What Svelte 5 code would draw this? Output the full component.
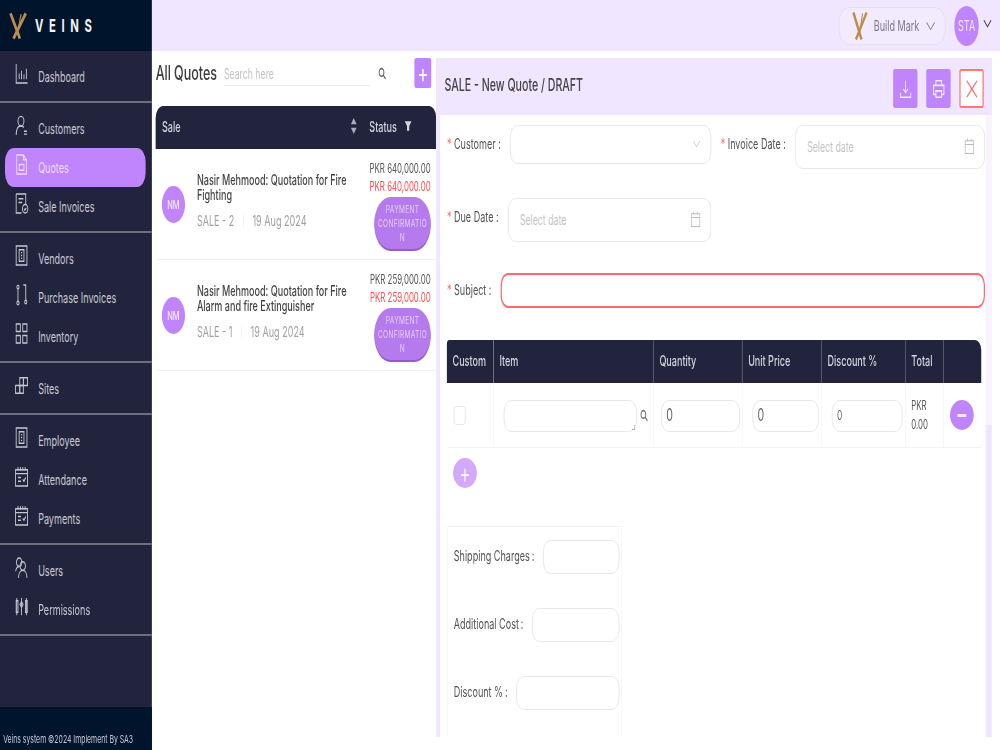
<script>
	const icons = {
		dashboard: ['M3 2v20h19', 'M8 18v-6', 'M12 18V9', 'M16 18v-5', 'M20 18V7'],
		customers: ['M11 2.5a5 5 0 1 1 0 10a5 5 0 1 1 0-10z', 'M3 22c0-6 3-9.500 8-9.500c2 0 3.500.5 5 1.500', 'M16 18h5', 'M16 21h5'],
		quotes: ['M4 2h11l5 5v15H4z', 'M15 2v5h5', 'M8 12h8v6H8z'],
		invoices: ['M3 2h16v11', 'M3 2v20h9', 'M7 7h8', 'M7 11h6', 'M18 13a4.500 4.500 0 1 1 0 9a4.500 4.500 0 1 1 0-9z', 'M16 17.500l1.500 1.500l2.500-2.500'],
		vendors: ['M3 2h18v20H3z', 'M8 6h8v12H8z', 'M11 9h2', 'M11 12h2', 'M11 15h2'],
		purchase: ['M6 2.500a1.800 1.800 0 1 1 0 3.600a1.800 1.800 0 1 1 0-3.600z', 'M6 6v13', 'M6 19a1.800 1.800 0 1 1 0 3.600a1.800 1.800 0 1 1 0-3.600z', 'M15 2h4v16', 'M19 18a1.800 1.800 0 1 1 0 3.600a1.800 1.800 0 1 1 0-3.600z'],
		inventory: ['M3 2h7v8H3z', 'M14 2h7v8h-7z', 'M3 14h7v8H3z', 'M14 14h7v8h-7z'],
		sites: ['M9 4h6v8H9z', 'M15 4h7v8h-7z', 'M2 12h7v8H2z', 'M9 12h6v8H9z'],
		calendar: ['M2 5h20v17H2z', 'M2 9h20', 'M6 2v4', 'M10 2v4', 'M14 2v4', 'M18 2v4', 'M6 13h5', 'M6 17h5', 'M14 15l2 2l3-4'],
		users: ['M8 2a4.500 4.500 0 1 1 0 9a4.500 4.500 0 1 1 0-9z', 'M2 16c1-3 3-5 6-5', 'M14 6a4.500 4.500 0 1 1 0 9a4.500 4.500 0 1 1 0-9z', 'M7 23c0-5 3-8 7-8s7 3 7 8'],
		permissions: ['M4 3v18', 'M3 6h3v12H3z', 'M12 3v18', 'M9.500 10l2.500-3l2.500 3l-2.500 3z', 'M20 3v18', 'M18.500 6h3v12h-3z']
	};

	const groups = [
		[{ label: 'Dashboard', icon: 'dashboard' }],
		[
			{ label: 'Customers', icon: 'customers' },
			{ label: 'Quotes', icon: 'quotes', active: true },
			{ label: 'Sale Invoices', icon: 'invoices' }
		],
		[
			{ label: 'Vendors', icon: 'vendors' },
			{ label: 'Purchase Invoices', icon: 'purchase' },
			{ label: 'Inventory', icon: 'inventory' }
		],
		[{ label: 'Sites', icon: 'sites' }],
		[
			{ label: 'Employee', icon: 'vendors' },
			{ label: 'Attendance', icon: 'calendar' },
			{ label: 'Payments', icon: 'calendar' }
		],
		[
			{ label: 'Users', icon: 'users' },
			{ label: 'Permissions', icon: 'permissions' }
		]
	];

	const quotes = [
		{ title: 'Nasir Mehmood: Quotation for Fire Fighting', no: 'SALE - 2', date: '19 Aug 2024', amount: 'PKR 640,000.00' },
		{ title: 'Nasir Mehmood: Quotation for Fire Alarm and fire Extinguisher', no: 'SALE - 1', date: '19 Aug 2024', amount: 'PKR 259,000.00' }
	];

	const columns = ['Custom', 'Item', 'Quantity', 'Unit Price', 'Discount %', 'Total', ''];
	const extras = ['Shipping Charges', 'Additional Cost', 'Discount %'];
</script>

{#snippet logo(w, h)}
	<svg class="logo" width={w} height={h} viewBox="0 0 32 40" preserveAspectRatio="none" fill="none" stroke="#bd8d4f" aria-hidden="true">
		<path d="M3 2l16 36" stroke-width="4.500" />
		<path d="M29 2L8 38" stroke-width="4.500" />
		<path d="M21 3l-6 28" stroke-width="2" />
	</svg>
{/snippet}

{#snippet searchIcon()}
	<svg class="search" viewBox="0 0 24 24" fill="none" stroke="currentColor" stroke-width="3" aria-hidden="true">
		<circle cx="10" cy="10" r="7" /><path d="M15 15l7 7" />
	</svg>
{/snippet}

{#snippet dateIcon()}
	<svg class="cal" viewBox="0 0 24 24" fill="none" stroke="currentColor" stroke-width="1.500" aria-hidden="true">
		<path d="M3 5h18v17H3z" /><path d="M3 10h18" /><path d="M8 2v4" /><path d="M16 2v4" />
	</svg>
{/snippet}

<div class="stage">
	<aside class="sidebar">
		<div class="brand">
			{@render logo(30, 28)}
			<span class="brand-name">VEINS</span>
		</div>
		<nav class="nav">
			{#each groups as group}
				<div class="group">
					{#each group as item}
						<a class="item" class:active={item.active} href="#top">
							<svg class="nav-icon" viewBox="0 0 24 24" fill="none" stroke="currentColor" stroke-width="1.500" aria-hidden="true">
								{#each icons[item.icon] as d}<path {d} />{/each}
							</svg>
							<span>{item.label}</span>
						</a>
					{/each}
				</div>
			{/each}
		</nav>
		<footer class="copy">Veins system ©2024 Implement By SA3</footer>
	</aside>

	<div class="main">
		<header class="topbar">
			<div class="org">
				{@render logo(26, 30)}
				<span>Build Mark</span>
				<svg class="chev" viewBox="0 0 24 14" fill="none" stroke="currentColor" stroke-width="1.500" aria-hidden="true"><path d="M3 2l9 10l9-10" /></svg>
			</div>
			<div class="me">STA</div>
			<svg class="me-chev" viewBox="0 0 24 14" fill="none" stroke="currentColor" stroke-width="2" aria-hidden="true"><path d="M3 2l9 10l9-10" /></svg>
		</header>

		<div class="content">
			<section class="list">
				<div class="list-top">
					<h2>All Quotes</h2>
					<div class="list-search">
						<span>Search here</span>
					</div>
					{@render searchIcon()}
					<button class="add" type="button">+</button>
				</div>
				<div class="list-head">
					<span class="head-sale">Sale</span>
					<svg class="sort" viewBox="0 0 12 20" fill="currentColor" aria-hidden="true"><path d="M6 1l5 7H1z" /><path d="M6 19l5-7H1z" /></svg>
					<span class="head-status">Status</span>
					<svg class="filter" viewBox="0 0 20 20" fill="currentColor" aria-hidden="true"><path d="M1 2h18l-6 8v8H7v-8z" /></svg>
				</div>
				{#each quotes as quote}
					<article class="row">
						<div class="avatar">NM</div>
						<div class="row-body">
							<h3>{quote.title}</h3>
							<p class="meta"><span>{quote.no}</span><i></i><span>{quote.date}</span></p>
						</div>
						<div class="row-side">
							<div class="amount">{quote.amount}</div>
							<div class="amount due">{quote.amount}</div>
							<div class="state">PAYMENT CONFIRMATIO N</div>
						</div>
					</article>
				{/each}
			</section>

			<section class="detail">
				<div class="detail-head">
					<h1>SALE - New Quote / DRAFT</h1>
					<div class="actions">
						<button class="act" type="button" aria-label="Download">
							<svg viewBox="0 0 24 24" fill="none" stroke="currentColor" stroke-width="1.500"><path d="M12 3v12" /><path d="M8 12l4 4l4-4" /><path d="M3 16v5h18v-5" /></svg>
						</button>
						<button class="act" type="button" aria-label="Print">
							<svg viewBox="0 0 24 24" fill="none" stroke="currentColor" stroke-width="1.800"><path d="M7 8V3h10v5" /><path d="M7 18H3V8h18v10h-4" /><path d="M7 14h10v7H7z" /></svg>
						</button>
						<button class="act close" type="button" aria-label="Close">
							<svg viewBox="0 0 24 24" fill="none" stroke="currentColor" stroke-width="1.800"><path d="M3 3l18 18" /><path d="M21 3L3 21" /></svg>
						</button>
					</div>
				</div>

				<div class="form">
					<div class="line first">
						<div class="field customer">
							<label for="customer"><b>*</b> Customer :</label>
							<div id="customer" class="box">
								<svg class="chev" viewBox="0 0 24 14" fill="none" stroke="currentColor" stroke-width="1.500" aria-hidden="true"><path d="M3 2l9 10l9-10" /></svg>
							</div>
						</div>
						<div class="field invoice">
							<label for="invoice"><b>*</b> Invoice Date :</label>
							<div id="invoice" class="box date"><span>Select date</span>{@render dateIcon()}</div>
						</div>
					</div>
					<div class="line second">
						<div class="field customer">
							<label for="due"><b>*</b> Due Date :</label>
							<div id="due" class="box date"><span>Select date</span>{@render dateIcon()}</div>
						</div>
					</div>
					<div class="line third">
						<div class="field subject">
							<label for="subject"><b>*</b> Subject :</label>
							<div id="subject" class="box error"></div>
						</div>
					</div>

					<table class="items">
						<thead>
							<tr>{#each columns as col}<th><span>{col}</span></th>{/each}</tr>
						</thead>
						<tbody>
							<tr>
								<td><span class="check"></span></td>
								<td>
									<div class="item-cell"><div class="box area"><i class="grip"></i></div>{@render searchIcon()}</div>
								</td>
								<td class="qty"><div class="box num">0</div></td>
								<td><div class="box num">0</div></td>
								<td><div class="box num small">0</div></td>
								<td class="total">PKR<br />0.00</td>
								<td><button class="round" type="button" aria-label="Remove"><i></i></button></td>
							</tr>
						</tbody>
					</table>
					<button class="round plus" type="button" aria-label="Add line">+</button>

					<div class="extras">
						{#each extras as extra}
							<div class="extra">
								<span>{extra}<i>:</i></span>
								<div class="box"></div>
							</div>
						{/each}
					</div>
				</div>
			</section>
		</div>
	</div>
</div>

<style>
	:global(body) {
		margin: 0;
		overflow: hidden;
		background: #fff;
	}

	/* the whole view is narrowed horizontally, sizes below are before the squeeze */
	.stage {
		display: flex;
		width: 1600px;
		height: 750px;
		overflow: hidden;
		transform: scale(0.625, 1);
		transform-origin: 0 0;
		font-family: Inter, 'Noto Sans', sans-serif;
		font-size: 14px;
		color: #444;
		filter: blur(0.6px);
	}

	.sidebar {
		display: flex;
		flex-direction: column;
		flex: 0 0 243px;
		background: #22243d;
		color: #c6c7d1;
	}

	.brand {
		display: flex;
		align-items: center;
		gap: 12px;
		height: 51px;
		padding-left: 14px;
		background: #00152b;
		box-sizing: border-box;
	}

	.brand-name {
		font-size: 18px;
		font-weight: 700;
		letter-spacing: 9px;
		color: #f2f3f5;
	}

	.nav {
		flex: 1;
	}

	.group {
		padding: 6px 10px 5px 8px;
		border-bottom: 2px solid #6d6f80;
	}

	.item {
		display: flex;
		align-items: center;
		gap: 15px;
		height: 39px;
		padding-left: 15px;
		border-radius: 14px;
		color: inherit;
		text-decoration: none;
		font-size: 14.500px;
	}

	.item span {
		margin-top: -1px;
	}

	.item.active {
		background: #c084fc;
		color: #ecdcff;
	}

	.nav-icon {
		flex: none;
		width: 23px;
		height: 23px;
		margin-top: -6px;
	}

	.copy {
		display: flex;
		align-items: flex-end;
		height: 43px;
		padding: 0 0 4px 5px;
		box-sizing: border-box;
		background: #00152b;
		font-size: 11px;
		color: #c6c7d1;
	}

	.main {
		display: flex;
		flex-direction: column;
		flex: 1;
		min-width: 0;
	}

	.topbar {
		display: flex;
		align-items: center;
		justify-content: flex-end;
		height: 51px;
		padding-right: 12px;
		box-sizing: border-box;
		background: #f0e6ff;
		flex: none;
	}

	.org {
		display: flex;
		align-items: center;
		gap: 9px;
		width: 171px;
		height: 38px;
		padding-left: 20px;
		box-sizing: border-box;
		border: 1.500px solid #e3deec;
		border-radius: 16px;
		background: #f1ebfd;
		color: #7d7890;
		font-size: 14.500px;
		margin-right: 14px;
	}

	.org .chev {
		width: 18px;
		height: 10px;
		color: #77728a;
	}

	.me {
		display: grid;
		place-items: center;
		width: 39px;
		height: 40px;
		border-radius: 50%;
		background: #c084fc;
		color: #f0e6ff;
		font-size: 14.500px;
	}

	.me-chev {
		width: 16px;
		height: 9px;
		margin: -4px 0 0 6px;
		color: #444;
	}

	.content {
		display: flex;
		flex: 1;
		min-height: 0;
		padding-top: 7px;
	}

	.list {
		flex: 0 0 455px;
		padding-left: 6px;
		box-sizing: border-box;
	}

	.list-top {
		display: flex;
		align-items: center;
		height: 30px;
		margin-bottom: 18px;
		padding-right: 8px;
	}

	.list-top h2 {
		margin: 0;
		font-size: 20px;
		font-weight: 500;
		color: #3c3c3c;
		white-space: nowrap;
	}

	.list-search {
		width: 234px;
		margin-left: 11px;
		padding: 6px 0 3px;
		border-bottom: 1.500px solid #f0e6ff;
		font-size: 14px;
		line-height: 16px;
		color: #c4c4c4;
	}

	.list-top .search {
		margin-left: 12px;
		color: #666;
	}

	.search {
		flex: none;
		width: 15px;
		height: 13px;
	}

	.add {
		width: 27px;
		height: 30px;
		margin-left: auto;
		padding: 0;
		border: 0;
		border-radius: 3px;
		background: #c084fc;
		color: #fff;
		font: 400 26px/28px Inter, sans-serif;
	}

	.list-head {
		display: flex;
		align-items: center;
		height: 43px;
		padding: 0 37px 3px 10px;
		box-sizing: border-box;
		background: #22243d;
		border-radius: 12px 12px 0 0;
		color: #d4d5dc;
		font-weight: 500;
		font-size: 14.500px;
	}

	.head-sale {
		flex: 1;
	}

	.sort {
		width: 12px;
		height: 18px;
		color: #aaacb8;
	}

	.head-status {
		margin-left: 19px;
	}

	.filter {
		width: 16px;
		height: 12px;
		margin-left: 10px;
		color: #d4d5dc;
	}

	.row {
		display: flex;
		align-items: center;
		height: 111px;
		padding: 0 9px 0 10px;
		box-sizing: border-box;
		border-bottom: 1.500px solid #f3f1f6;
	}

	.avatar {
		display: grid;
		place-items: center;
		flex: none;
		width: 37px;
		height: 37px;
		margin: 1px 19px 0 0;
		border-radius: 50%;
		background: #c084fc;
		color: #f4eaff;
		font-size: 12px;
		font-weight: 500;
	}

	.row-body {
		flex: 1;
		min-width: 0;
		margin-top: -8px;
	}

	.row-body h3 {
		margin: 0;
		width: 252px;
		font-size: 14.500px;
		line-height: 15px;
		font-weight: 500;
		color: #444;
	}

	.meta {
		display: flex;
		align-items: center;
		margin: 11px 0 0;
		font-size: 14.500px;
		line-height: 16px;
		color: #a3a3a3;
	}

	.meta i {
		width: 1px;
		height: 14px;
		margin: 0 14px;
		background: #eee;
	}

	.row-side {
		flex: none;
		width: 100px;
		text-align: right;
	}

	.amount {
		font-size: 12.600px;
		line-height: 18px;
		white-space: nowrap;
		color: #555;
	}

	.amount.due {
		color: #ff4d4f;
	}

	.state {
		width: 90px;
		height: 52px;
		margin: 1px 0 0 auto;
		padding: 6px 0;
		box-sizing: border-box;
		border-radius: 36px;
		background: #b57bee;
		box-shadow: 0 2px 1px #8d5bc4;
		color: #e3ccfa;
		font-size: 10.500px;
		line-height: 14px;
		letter-spacing: 0.500px;
		text-align: center;
		overflow-wrap: anywhere;
	}

	.detail {
		display: flex;
		flex-direction: column;
		flex: 1;
		min-width: 0;
		height: 679px;
		margin-right: 13px;
		background: linear-gradient(#f0e6ff 57px, #f8f3ff 57px, #f8f3ff 367px, #f0e6ff 367px);
	}

	.detail-head {
		display: flex;
		align-items: center;
		justify-content: space-between;
		height: 57px;
		padding: 0 13px;
		flex: none;
		box-sizing: border-box;
		background: #f0e6ff;
	}

	h1 {
		margin: 0 0 3px;
		font-size: 17px;
		font-weight: 500;
		color: #444;
	}

	.actions {
		display: flex;
		gap: 14px;
		margin-top: 4px;
	}

	.act {
		display: grid;
		place-items: center;
		width: 39px;
		height: 39px;
		padding: 0;
		border: 0;
		border-radius: 3px;
		background: #c084fc;
		color: #f4eaff;
	}

	.act svg {
		width: 26px;
		height: 22px;
	}

	.act.close {
		box-sizing: border-box;
		border: 2px solid #ff7875;
		background: #fff;
		color: #ff6b6b;
	}

	.form {
		flex: 1;
		min-height: 0;
		margin-right: 10px;
		padding: 10px 0 0 11px;
		border-left: 6px solid #f0e6ff;
		background: #fff;
		overflow: hidden;
	}

	.line {
		display: flex;
		padding-right: 1px;
	}

	.line.first {
		height: 73px;
	}

	.line.second {
		height: 75px;
	}

	.line.third {
		height: 67px;
	}

	.field {
		display: flex;
		align-items: flex-start;
	}

	.field.customer {
		flex: 0 0 423px;
	}

	.field.invoice {
		flex: 1;
		margin-left: 15px;
	}

	.field.subject {
		flex: 1;
	}

	.field label {
		flex: none;
		padding: 11px 0;
		margin-right: 15px;
		line-height: 16px;
		font-size: 14.500px;
		white-space: nowrap;
		color: #555;
	}

	.field.subject label {
		padding-top: 9px;
	}

	.field b {
		color: #ff7875;
		font-weight: 400;
	}

	.box {
		position: relative;
		box-sizing: border-box;
		border: 1.500px solid #e4e2e6;
		border-radius: 12px;
		background: #fff;
	}

	.field .box {
		display: flex;
		align-items: center;
		justify-content: space-between;
		flex: 1;
		height: 39px;
		padding: 0 15px 2px 18px;
	}

	#customer {
		justify-content: flex-end;
	}

	#customer .chev {
		width: 15px;
		height: 8px;
		color: #bbb;
	}

	.field .box.date {
		height: 44px;
		color: #c4c4c4;
		font-size: 14px;
	}

	.cal {
		width: 18px;
		height: 18px;
		color: #bbb;
	}

	.field .box.error {
		height: 35px;
		border: 2px solid #ff6b6b;
	}

	.items {
		width: 855px;
		border-collapse: separate;
		border-spacing: 0;
		table-layout: fixed;
	}

	.items th {
		height: 43px;
		padding: 0 9px;
		background: #22243d;
		border-right: 1.500px solid #70727f;
		box-sizing: border-box;
		text-align: left;
		font-size: 14.500px;
		font-weight: 500;
		color: #d4d5dc;
		white-space: nowrap;
	}

	.items th span {
		display: block;
		margin-top: -2px;
	}

	.items th:nth-child(1) { width: 75px; }
	.items th:nth-child(2) { width: 256px; }
	.items th:nth-child(3) { width: 142px; }
	.items th:nth-child(4) { width: 127px; }
	.items th:nth-child(5) { width: 134px; }
	.items th:nth-child(6) { width: 61px; }

	.items th:last-child {
		border-right: 0;
		border-top-right-radius: 10px;
	}

	.items th:first-child {
		border-top-left-radius: 4px;
	}

	.items td {
		height: 65px;
		padding: 1px 4px 0 16px;
		box-sizing: border-box;
		border-right: 1.500px solid #f3f2f5;
		border-bottom: 1.500px solid #f3f2f5;
	}

	.items td:first-child {
		padding: 0 0 0 11px;
	}

	.items td.qty {
		padding: 1px 3px 0 12px;
	}

	.items td:last-child {
		border-right: 0;
		padding: 0 10px;
	}

	.check {
		display: block;
		width: 19px;
		height: 19px;
		box-sizing: border-box;
		border: 1.500px solid #e4e2e6;
		border-radius: 4px;
	}

	.item-cell {
		display: flex;
		align-items: center;
		gap: 4px;
		margin-right: 3px;
	}

	.item-cell .search {
		color: #777;
	}

	.box.area {
		flex: 1;
		height: 32px;
	}

	.grip {
		position: absolute;
		right: 2px;
		bottom: 1px;
		width: 4px;
		height: 4px;
		border-right: 1px solid #aaa;
		border-bottom: 1px solid #aaa;
	}

	.box.num {
		height: 32px;
		padding-left: 7px;
		line-height: 29px;
		font-size: 17px;
		color: #666;
	}

	.box.num.small {
		font-size: 13.500px;
	}

	.items td.total {
		padding: 0 0 0 9px;
		font-size: 12.500px;
		line-height: 19px;
		color: #555;
	}

	.round {
		display: grid;
		place-items: center;
		width: 38px;
		height: 30px;
		padding: 0;
		border: 0;
		border-radius: 50%;
		background: #c084fc;
		color: #fff;
	}

	.round i {
		width: 14px;
		height: 3px;
		background: #f4eaff;
	}

	.round.plus {
		margin: 10px 0 0 10px;
		font: 300 28px/28px Inter, sans-serif;
		background: #d3a8fd;
	}

	.extras {
		width: 280px;
		height: 240px;
		margin-top: 38px;
		padding: 13px 3px 0 10px;
		box-sizing: border-box;
		border: 1.500px solid #f3f1f6;
	}

	.extra {
		display: flex;
		align-items: center;
		justify-content: space-between;
		gap: 14px;
		height: 34px;
		margin-bottom: 34px;
		font-size: 14.500px;
		color: #555;
		white-space: nowrap;
	}

	.extra > span {
		margin-top: -4px;
	}

	.extra i {
		margin-left: 3px;
		font-style: normal;
	}

	.extra .box {
		flex: 1;
		height: 34px;
	}
</style>
